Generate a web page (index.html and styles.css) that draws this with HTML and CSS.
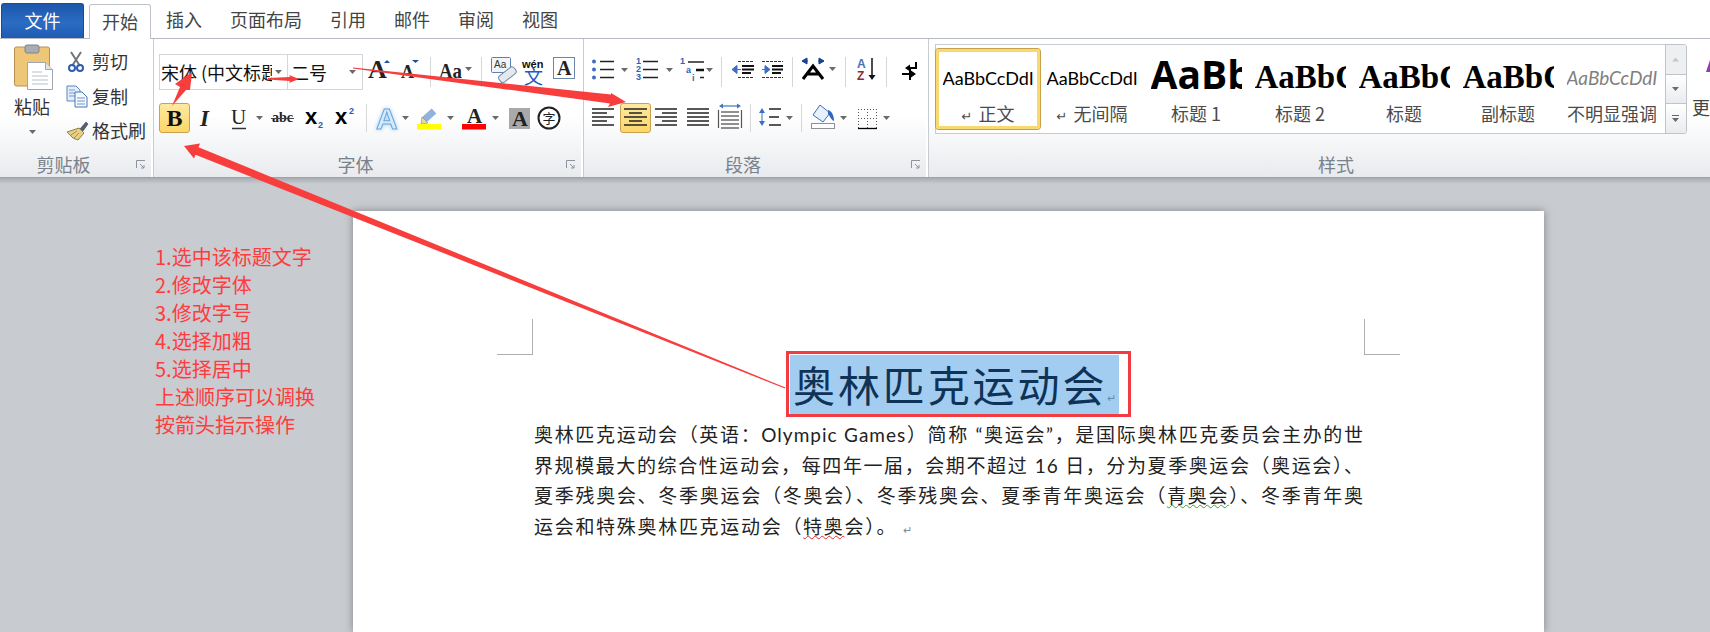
FILE: index.html
```html
<!DOCTYPE html>
<html lang="zh-CN">
<head>
  <meta charset="UTF-8" />
  <title>文档 - Word</title>
  <link rel="stylesheet" href="styles.css">
</head>
<body>
<div class="app">

  <nav class="tabs">
    <a class="tab-file">文件</a>
    <a class="tab-active">开始</a>
    <a class="tab">插入</a>
    <a class="tab">页面布局</a>
    <a class="tab">引用</a>
    <a class="tab">邮件</a>
    <a class="tab">审阅</a>
    <a class="tab">视图</a>
  </nav>

  <section class="ribbon">

    <!-- clipboard -->
    <div class="group group-clip">
      <div class="clip-body">
        <div class="paste">
          <svg width="40" height="47" viewBox="0 0 40 47">
            <rect x="0.5" y="3" width="35" height="39" rx="2" fill="#eec678" stroke="#b98f4f"/>
            <rect x="11" y="1" width="14" height="8" rx="2" fill="#a9adb3" stroke="#7e8288"/>
            <path d="M13.5 18.5h18l7 7v20h-25z" fill="#fff" stroke="#9ea6b0"/>
            <path d="M31.5 18.5v7h7" fill="#dfe5ec" stroke="#9ea6b0"/>
            <path d="M18 28h10M18 32h16M18 36h16M18 40h16" stroke="#b9c0c9"/>
          </svg>
          <span class="paste-label">粘贴</span>
          <svg width="8" height="5" viewBox="0 0 8 5"><path class="caret" d="M0 0h7l-3.5 4z"/></svg>
        </div>
        <ul class="clip-list">
          <li>
            <svg width="26" height="34" viewBox="0 0 26 34">
              <path d="M5 8l9 14M15 8l-9 14" stroke="#70757c" stroke-width="2" fill="none"/>
              <circle cx="6" cy="24" r="3" fill="none" stroke="#2c5cab" stroke-width="2"/>
              <circle cx="14" cy="24" r="3" fill="none" stroke="#2c5cab" stroke-width="2"/>
            </svg>
            剪切
          </li>
          <li>
            <svg width="26" height="34" viewBox="0 0 26 34">
              <path d="M1 7h9l4 4v11H1z" fill="#e4edf9" stroke="#5b86c4"/>
              <path d="M3 11h6M3 14h8M3 17h8" stroke="#7b9ccc"/>
              <path d="M9 13h7l5 5v10H9z" fill="#f6f9fd" stroke="#4474b8"/>
              <path d="M11 19h8M11 22h8M11 25h8" stroke="#6d94ca"/>
            </svg>
            复制
          </li>
          <li>
            <svg width="26" height="34" viewBox="0 0 26 34">
              <path d="M14 16l6-7 2 2-5 7z" fill="#555e6e" stroke="#3d4450" stroke-width="0.6"/>
              <path d="M1 19l12-4 5 5-6 7-5-2-2-2z" fill="#e8cf86" stroke="#94803f"/>
              <path d="M5 22l6-4M8 25l5-5" stroke="#a8924e"/>
            </svg>
            格式刷
          </li>
        </ul>
      </div>
      <footer class="group-foot">
        <span class="group-name">剪贴板</span>
        <span class="launcher"><svg width="10" height="9" viewBox="0 0 10 9"><path d="M.5 8V.5H9M4 4l4 4M8 5v3H5" fill="none" stroke="#8c939c"/></svg></span>
      </footer>
    </div>

    <!-- font -->
    <div class="group group-font">
      <div class="row row-top">
        <div class="combo combo-font"><span class="combo-text">宋体 (中文标题</span><svg width="8" height="5" viewBox="0 0 8 5"><path class="caret" d="M0 0h7l-3.5 4z"/></svg></div>
        <div class="combo combo-size"><span class="combo-text">二号</span><svg width="8" height="5" viewBox="0 0 8 5"><path class="caret" d="M0 0h7l-3.5 4z"/></svg></div>
        <svg width="30" height="36" viewBox="0 0 30 36">
          <text class="serif-b" x="4" y="24" font-size="26">A</text>
          <path d="M20 9l3-3 3 3z" fill="#1f4e9a"/>
        </svg>
        <svg width="32" height="36" viewBox="0 0 32 36">
          <text class="serif-b" x="7" y="24" font-size="18">A</text>
          <path d="M18 6h7l-3.5 3z" fill="#1f4e9a"/>
        </svg>
        <span class="sep sep-top"></span>
        <svg width="42" height="36" viewBox="0 0 42 36">
          <text class="serif-b" x="4" y="24" font-size="21" textLength="23" lengthAdjust="spacingAndGlyphs">Aa</text>
          <path class="caret" d="M30 13h7l-3.500 4z"/>
        </svg>
        <span class="sep sep-top"></span>
        <svg width="33" height="36" viewBox="0 0 33 36">
          <rect x="5.500" y="3.500" width="19" height="15" rx="1" fill="#f0f5fb" stroke="#5a7fb0"/>
          <text class="sans" x="8" y="14" font-size="10" fill="#333">Aa</text>
          <rect x="12" y="17" width="19" height="8" rx="3" transform="rotate(-38 21 21)" fill="#e3e9f0" stroke="#76879a"/>
        </svg>
        <svg width="30" height="36" viewBox="0 0 30 36">
          <text class="sans-b" x="3" y="14" font-size="11" fill="#111">wén</text>
          <text class="cjk" x="5" y="30" font-size="19" fill="#2459bd">文</text>
        </svg>
        <svg width="29" height="36" viewBox="0 0 29 36">
          <rect x="4.500" y="3.500" width="21" height="21" fill="#fff" stroke="#6d87a8"/>
          <text class="serif-b" x="8" y="21" font-size="20">A</text>
        </svg>
      </div>
      <div class="row">
        <span class="btn-on"><b class="bold-b">B</b></span>
        <svg width="30" height="30" viewBox="0 0 30 30">
          <text class="serif-b" x="10" y="23" font-size="23" font-style="italic">I</text>
        </svg>
        <svg width="48" height="30" viewBox="0 0 48 30">
          <text class="serif" x="11" y="21" font-size="21">U</text>
          <path d="M12 25.500h14" stroke="#333" stroke-width="1.500"/>
          <path class="caret" d="M36 13h7l-3.500 4z"/>
        </svg>
        <svg width="30" height="30" viewBox="0 0 30 30">
          <text class="serif-b" x="4" y="19" font-size="14">abc</text>
          <path d="M3 15.500h23" stroke="#444"/>
        </svg>
        <svg width="32" height="30" viewBox="0 0 32 30">
          <text class="sans-b" x="7" y="21" font-size="22">x</text>
          <text class="sans-b" x="20" y="25" font-size="9" fill="#2c5cab">2</text>
        </svg>
        <svg width="32" height="30" viewBox="0 0 32 30">
          <text class="sans-b" x="5" y="21" font-size="22">x</text>
          <text class="sans-b" x="19" y="11" font-size="9" fill="#2c5cab">2</text>
        </svg>
        <span class="sep sep-low"></span>
        <svg width="41" height="30" viewBox="0 0 41 30">
          <text class="sans-b glow" x="5" y="26" font-size="30" fill="#d8e9fb" stroke="#6aa6de">A</text>
          <path class="caret" d="M31 13h7l-3.500 4z"/>
        </svg>
        <svg width="45" height="30" viewBox="0 0 45 30">
          <path d="M12 17l10-9" stroke="#8fb3dc" stroke-width="7"/>
          <path d="M10 14l6 6-7 1z" fill="#e9d9a8" stroke="#8e8460" stroke-width="0.6"/>
          <rect x="5" y="21" width="24" height="5.500" fill="#ffff00"/>
          <path class="caret" d="M35 13h7l-3.500 4z"/>
        </svg>
        <svg width="45" height="30" viewBox="0 0 45 30">
          <text class="serif-b" x="10" y="20" font-size="21" fill="#1f3f7f">A</text>
          <rect x="5" y="21" width="24" height="5.500" fill="#ff0000"/>
          <path class="caret" d="M35 13h7l-3.500 4z"/>
        </svg>
        <svg width="32" height="30" viewBox="0 0 32 30">
          <rect x="7" y="5" width="21" height="21" fill="#a9a9a9"/>
          <text class="serif-b" x="10" y="23" font-size="22" fill="#111">A</text>
        </svg>
        <svg width="31" height="30" viewBox="0 0 31 30">
          <circle cx="15" cy="15" r="10.500" fill="#fff" stroke="#222" stroke-width="2"/>
          <text class="cjk" x="8.500" y="20" font-size="13" fill="#222">字</text>
        </svg>
      </div>
      <footer class="group-foot">
        <span class="group-name">字体</span>
        <span class="launcher"><svg width="10" height="9" viewBox="0 0 10 9"><path d="M.5 8V.5H9M4 4l4 4M8 5v3H5" fill="none" stroke="#8c939c"/></svg></span>
      </footer>
    </div>

    <!-- paragraph -->
    <div class="group group-para">
      <div class="row row-top">
        <svg width="43" height="36" viewBox="0 0 43 36">
          <path d="M11 7.500h14M11 15.500h14M11 23.500h14" stroke="#222" stroke-width="1.500"/>
          <circle cx="5" cy="7.500" r="2" fill="#3a6fc4"/><circle cx="5" cy="15.500" r="2" fill="#3a6fc4"/><circle cx="5" cy="23.500" r="2" fill="#3a6fc4"/>
          <path class="caret" d="M32 14h7l-3.500 4z"/>
        </svg>
        <svg width="44" height="36" viewBox="0 0 44 36">
          <path d="M11 7.500h15M11 15.500h15M11 23.500h15" stroke="#222" stroke-width="1.500"/>
          <text class="sans-b num" x="4" y="10">1</text><text class="sans-b num" x="4" y="18">2</text><text class="sans-b num" x="4" y="26">3</text>
          <path class="caret" d="M34 14h7l-3.500 4z"/>
        </svg>
        <svg width="41" height="36" viewBox="0 0 41 36">
          <path d="M12 8h16" stroke="#222" stroke-width="1.500"/>
          <path d="M20 16h8" stroke="#111" stroke-width="2.500"/>
          <path d="M24 23.500h4" stroke="#222" stroke-width="1.500"/>
          <text class="sans-b num" x="4" y="10">1</text><text class="sans-b num" x="10" y="19">a</text><text class="sans-b num" x="16" y="27">i</text>
          <path class="caret" d="M30 14h7l-3.500 4z"/>
        </svg>
        <span class="sep sep-top"></span>
        <svg width="32" height="36" viewBox="0 0 32 36">
          <path d="M12 7.500h16M12 23.500h16" stroke="#333" stroke-dasharray="3 1"/>
          <path d="M16 12h12M16 15.500h12M16 19h9" stroke="#111" stroke-width="2"/>
          <path d="M6 15.500l5-4v8zM10 15.500h5" fill="#3a6fc4" stroke="#3a6fc4"/>
        </svg>
        <svg width="30" height="36" viewBox="0 0 30 36">
          <path d="M4 7.500h21M4 23.500h21" stroke="#333" stroke-dasharray="3 1"/>
          <path d="M14 12h11M14 15.500h11M14 19h9" stroke="#111" stroke-width="2"/>
          <path d="M12 15.500l-5-4v8zM4 15.500h4" fill="#3a6fc4" stroke="#3a6fc4"/>
        </svg>
        <span class="sep sep-top"></span>
        <svg width="44" height="36" viewBox="0 0 44 36">
          <path d="M5 7h6M10 4l-5 3 5 3z M21 7h6M22 4l5 3-5 3z" fill="#1c3f94" stroke="#1c3f94"/>
          <path d="M6 25l10-13 10 13M10 20h12" fill="none" stroke="#000" stroke-width="3"/>
          <path class="caret" d="M32 13h7l-3.500 4z"/>
        </svg>
        <span class="sep sep-top"></span>
        <svg width="32" height="36" viewBox="0 0 32 36">
          <text class="sans-b" x="7" y="14" font-size="12" fill="#4a6fb5">A</text>
          <text class="sans-b" x="7" y="26" font-size="12" fill="#8b2c2c">Z</text>
          <path d="M22 4v20" stroke="#111" stroke-width="1.500"/>
          <path d="M18.500 21h7L22 26z" fill="#111"/>
        </svg>
        <span class="sep sep-top"></span>
        <svg width="32" height="36" viewBox="0 0 32 36">
          <path d="M25 8v6h-8M19 26V14M11 20h9" fill="none" stroke="#000" stroke-width="2"/>
          <path d="M14 14l5-3.500v7zM25 20l-5-3.500v7z" fill="#000"/>
        </svg>
      </div>
      <div class="row">
        <svg width="31" height="30" viewBox="0 0 31 30">
          <path d="M3 6h22M3 10h15M3 14h22M3 18h15M3 22h22" stroke="#222" stroke-width="1.300"/>
        </svg>
        <span class="btn-on">
          <svg width="29" height="28" viewBox="0 0 29 28">
            <path d="M3 5h23M8 9h13M3 13h23M8 17h13M3 21h23" stroke="#222" stroke-width="1.300"/>
          </svg>
        </span>
        <svg width="30" height="30" viewBox="0 0 30 30">
          <path d="M4 6h22M11 10h15M4 14h22M11 18h15M4 22h22" stroke="#222" stroke-width="1.300"/>
        </svg>
        <svg width="33" height="30" viewBox="0 0 33 30">
          <path d="M6 6h22M6 10h22M6 14h22M6 18h22M6 22h22" stroke="#222" stroke-width="1.300"/>
        </svg>
        <svg width="32" height="30" viewBox="0 0 32 30">
          <path d="M7 3h18" stroke="#4474b8" stroke-width="1.200"/>
          <path d="M5 3l4-2.500v5zM27 3l-4-2.500v5z" fill="#4474b8"/>
          <path d="M4.500 7v18M27.500 7v18" stroke="#555" stroke-width="1.200"/>
          <path d="M7 9h18M7 13h18M7 17h18M7 21h18M7 25h18" stroke="#222" stroke-width="1.200"/>
        </svg>
        <span class="sep sep-low"></span>
        <svg width="42" height="30" viewBox="0 0 42 30">
          <path d="M7 5l-3 5h6zM7 23l-3-5h6z" fill="#3a6fc4"/>
          <path d="M7 10v8" stroke="#3a6fc4"/>
          <path d="M14 6h12M14 14h10M14 22h12" stroke="#222" stroke-width="1.500"/>
          <path class="caret" d="M31 13h7l-3.500 4z"/>
        </svg>
        <span class="sep sep-low"></span>
        <svg width="45" height="30" viewBox="0 0 45 30">
          <path d="M14 2l10 8-7 9-10-7z" fill="#e8f0fb" stroke="#3f6fb8"/>
          <path d="M22 7c4 1 6 6 6 11-3-1-4-5-6-7z" fill="#2f66c4"/>
          <rect x="5.500" y="20.500" width="23" height="5" fill="#fff" stroke="#8d9096"/>
          <path class="caret" d="M34 13h7l-3.500 4z"/>
        </svg>
        <svg width="43" height="30" viewBox="0 0 43 30">
          <path d="M7 6.500h19M7 15.500h19M7.500 6v19M16.500 6v19M25.500 6v19" stroke="#555" stroke-dasharray="1 2"/>
          <path d="M7 25.500h19" stroke="#000" stroke-width="1.300"/>
          <path class="caret" d="M32 13h7l-3.500 4z"/>
        </svg>
      </div>
      <footer class="group-foot">
        <span class="group-name">段落</span>
        <span class="launcher"><svg width="10" height="9" viewBox="0 0 10 9"><path d="M.5 8V.5H9M4 4l4 4M8 5v3H5" fill="none" stroke="#8c939c"/></svg></span>
      </footer>
    </div>

    <!-- styles -->
    <div class="group group-styles">
      <div class="styles-body">
        <div class="gallery">
          <div class="style-item style-current">
            <div class="sample sample-body">AaBbCcDdI</div>
            <div class="style-name"><i>↵</i>正文</div>
          </div>
          <div class="style-item">
            <div class="sample sample-body">AaBbCcDdI</div>
            <div class="style-name"><i>↵</i>无间隔</div>
          </div>
          <div class="style-item">
            <div class="sample sample-h1">AaBb</div>
            <div class="style-name">标题 1</div>
          </div>
          <div class="style-item">
            <div class="sample sample-h2">AaBbC</div>
            <div class="style-name">标题 2</div>
          </div>
          <div class="style-item">
            <div class="sample sample-h2">AaBbC</div>
            <div class="style-name">标题</div>
          </div>
          <div class="style-item">
            <div class="sample sample-h2">AaBbC</div>
            <div class="style-name">副标题</div>
          </div>
          <div class="style-item">
            <div class="sample sample-em">AaBbCcDdI</div>
            <div class="style-name">不明显强调</div>
          </div>
        </div>
        <div class="gallery-scroll">
          <span class="scroll-btn scroll-off"><svg width="8" height="5" viewBox="0 0 8 5"><path d="M0 4.500h7L3.500 .5z" fill="#c3c6cb"/></svg></span>
          <span class="scroll-btn"><svg width="8" height="5" viewBox="0 0 8 5"><path class="caret" d="M0 0h7l-3.5 4z"/></svg></span>
          <span class="scroll-btn"><svg width="8" height="8" viewBox="0 0 8 8"><path d="M0 .5h7" stroke="#666"/><path class="caret" d="M0 3h7l-3.5 4z"/></svg></span>
        </div>
        <div class="change-styles">
          <svg width="18" height="40" viewBox="0 0 18 40"><path d="M14 28l5-15v15z" fill="#8c3fb0"/></svg>
          <span>更改样式</span>
        </div>
      </div>
      <footer class="group-foot">
        <span class="group-name">样式</span>
        <span class="launcher"></span>
      </footer>
    </div>
  </section>

  <main class="workspace">
    <aside class="notes">
      <p>1.选中该标题文字</p>
      <p>2.修改字体</p>
      <p>3.修改字号</p>
      <p>4.选择加粗</p>
      <p>5.选择居中</p>
      <p>上述顺序可以调换</p>
      <p>按箭头指示操作</p>
    </aside>
    <article class="page">
      <div class="crop-row">
        <span class="crop crop-left"></span>
        <span class="crop crop-right"></span>
      </div>
      <div class="title-box">
        <h1 class="doc-title">奥林匹克运动会<i>↵</i></h1>
      </div>
      <div class="doc-body">
        <p>奥林匹克运动会（英语：Olympic Games）简称 “奥运会”，是国际奥林匹克委员会主办的世</p>
        <p>界规模最大的综合性运动会，每四年一届，会期不超过 16 日，分为夏季奥运会（奥运会）、</p>
        <p>夏季残奥会、冬季奥运会（冬奥会）、冬季残奥会、夏季青年奥运会（<span class="squiggle-green">青奥会</span>）、冬季青年奥</p>
        <p class="last-line">运会和特殊奥林匹克运动会（<span class="squiggle-red">特奥</span>会）。<i>↵</i></p>
      </div>
    </article>
  </main>

  <!-- red annotation arrows drawn over the window -->
  <svg class="arrows" width="1710" height="632" viewBox="0 0 1710 632">
    <polygon points="172,106 180,87 175,84 192,72 190,90 186,90"/>
    <polygon points="268,78 290,77 289,75 299,79 289,83 290,81 268,79.500"/>
    <polygon points="353,67.500 611,94.500 611,93 626,102 608,107 610,103.500 353,68.500"/>
    <polygon points="184,146 200,143.600 198.500,147.300 785.500,387.500 785,388.500 195.500,154.700 194,158.400"/>
  </svg>
</div>
</body>
</html>
```

FILE: styles.css
```css
* {
  box-sizing: border-box;
}
html, body {
  margin: 0;
  height: 100%;
  overflow: hidden;
}
body {
  font-family: "Noto Sans CJK SC", sans-serif;
  color: #444;
  background-color: #c8cbd0;
}
svg {
  display: block;
  flex: none;
}
.app {
  position: relative;
  width: 1710px;
  height: 632px;
  display: flex;
  flex-direction: column;
  overflow: hidden;
}

/* svg text */
.serif-b { font-family: "Liberation Serif", serif; font-weight: 700; fill: #222; }
.serif { font-family: "Liberation Serif", serif; fill: #222; }
.sans { font-family: "Liberation Sans", sans-serif; }
.sans-b { font-family: "Liberation Sans", sans-serif; font-weight: 700; }
.cjk { font-family: "Noto Sans CJK SC", sans-serif; }
.num { font-size: 9px; fill: #2f62b8; }
.glow { filter: drop-shadow(0 0 2px #a6d0f5); }
.caret { fill: #6a6a6a; }

/* tabs */
.tabs {
  height: 38px;
  flex: none;
  display: flex;
  align-items: flex-end;
  padding-left: 1px;
  background-color: #fff;
  font-size: 18px;
}
.tabs a {
  height: 35px;
  line-height: 33px;
  white-space: nowrap;
}
.tab-file {
  width: 83px;
  text-align: center;
  color: #fff;
  border-radius: 3px 3px 0 0;
  background: linear-gradient(#1c57ab, #2b6cc4 55%, #1f5cb2);
  border: 1px solid #1a4c94;
  border-bottom: 0;
}
.tab-active {
  width: 62px;
  margin-left: 5px;
  margin-bottom: -1px;
  text-align: center;
  background-color: #fff;
  border: 1px solid #c0c3c9;
  border-bottom: 0;
  border-radius: 3px 3px 0 0;
  position: relative;
}
.tab {
  padding: 0 14px;
}
.tab-active + .tab {
  margin-left: 1px;
}

/* ribbon */
.ribbon {
  height: 140px;
  flex: none;
  display: flex;
  border-top: 1px solid #b9bbc3;
  border-bottom: 1px solid #9fa3a9;
  background: linear-gradient(#fff 55%, #f3f4f6 80%, #e8eaed);
}
.group {
  flex: none;
  display: flex;
  flex-direction: column;
  border-right: 1px solid #c8cbd1;
  box-shadow: inset -2px 0 0 #fff;
}
.group-clip { width: 154px; }
.group-font { width: 430px; padding: 15px 0 0 5px; }
.group-para { width: 345px; padding: 15px 0 0 5px; }
.group-styles { width: 840px; border-right: 0; box-shadow: none; padding-top: 5px; }

.group-foot {
  margin-top: auto;
  height: 26px;
  display: flex;
  align-items: center;
  font-size: 18px;
  color: #78818c;
}
.group-font .group-foot,
.group-para .group-foot {
  margin-left: -5px;
}
.group-name {
  flex: 1;
  text-align: center;
  line-height: 26px;
}
.launcher {
  width: 26px;
  padding-left: 9px;
}

.row {
  display: flex;
  align-items: center;
  height: 30px;
}
.row-top {
  height: 36px;
  margin-bottom: 13px;
}
.sep {
  flex: none;
  width: 9px;
  display: flex;
  justify-content: center;
}
.sep::after {
  content: "";
  width: 1px;
  background-color: #d5d7db;
}
.sep-top { height: 30px; }
.sep-low { height: 28px; }

.btn-on {
  flex: none;
  width: 31px;
  height: 30px;
  display: flex;
  align-items: center;
  justify-content: center;
  border: 1px solid #c8a24e;
  border-radius: 3px;
  background: linear-gradient(#fde9a0, #fdd669);
}
.bold-b {
  font-family: "Liberation Serif", serif;
  font-size: 24px;
  line-height: 1;
  color: #111;
}

/* clipboard */
.clip-body {
  display: flex;
  padding-top: 5px;
}
.paste {
  width: 66px;
  padding-left: 14px;
  display: flex;
  flex-direction: column;
}
.paste-label {
  font-size: 18px;
  line-height: 26px;
  margin-top: 2px;
  color: #333;
}
.paste svg:last-child {
  margin: 11px 0 0 15px;
}
.clip-list {
  list-style: none;
  margin: 0;
  padding: 0;
  font-size: 18px;
  color: #333;
}
.clip-list li {
  height: 34.500px;
  display: flex;
  align-items: center;
  white-space: nowrap;
}

/* font combos */
.combo {
  height: 36px;
  display: flex;
  align-items: center;
  border: 1px solid #d3d6da;
  background-color: #fff;
  font-size: 18px;
  color: #111;
}
.combo-font {
  width: 129px;
  padding-left: 1px;
}
.combo-size {
  width: 76px;
  margin-left: -1px;
  padding-left: 3px;
  margin-right: 1px;
}
.combo-text {
  flex: 1;
  overflow: hidden;
  white-space: nowrap;
}
.combo-font .combo-text { margin-right: 3px; }
.combo svg { margin-right: 4px; }
.combo-size svg { margin-right: 5px; }

/* styles gallery */
.styles-body {
  display: flex;
  align-items: flex-start;
  padding-left: 6px;
}
.gallery {
  width: 731px;
  height: 90px;
  flex: none;
  display: flex;
  align-items: flex-start;
  padding: 0;
  border: 1px solid #c8cbd0;
  background-color: #fff;
}
.style-item {
  flex: none;
  width: 104px;
  height: 88px;
  display: flex;
  flex-direction: column;
  align-items: center;
  border: 3px solid transparent;
}
.style-current {
  height: 80px;
  margin-top: 4px;
  border-color: #f7d96f;
  border-radius: 3px;
  box-shadow: 0 0 0 1px #c9a04a;
}
.sample {
  flex: none;
  width: 91px;
  height: 52px;
  line-height: 60px;
  overflow: hidden;
  white-space: nowrap;
  color: #000;
}
.style-current .sample {
  height: 48px;
  line-height: 52px;
}
.style-name {
  flex: none;
  height: 26px;
  font-size: 18px;
  line-height: 26px;
  white-space: nowrap;
  color: #4b4b4b;
}
.style-name i {
  font-style: normal;
  font-family: "DejaVu Sans", sans-serif;
  font-size: 13px;
  margin-right: 6px;
}
.sample-body {
  font-family: "Lato", sans-serif;
  font-size: 18px;
  text-align: center;
}
.sample-h1 {
  font-family: "Open Sans", sans-serif;
  font-weight: 700;
  font-size: 39px;
  line-height: 52px;
}
.sample-h2 {
  font-family: "Liberation Serif", serif;
  font-weight: 700;
  font-size: 33px;
  line-height: 58px;
}
.sample-em {
  font-family: "Lato", sans-serif;
  font-style: italic;
  font-size: 19px;
  color: #808080;
}
.gallery-scroll {
  width: 22px;
  height: 90px;
  flex: none;
  margin-left: -1px;
  display: flex;
  flex-direction: column;
  border: 1px solid #c0c4ca;
  border-radius: 0 3px 3px 0;
  overflow: hidden;
}
.scroll-btn {
  flex: 1;
  display: flex;
  align-items: center;
  justify-content: center;
  background: linear-gradient(#fff, #e9ebee);
  border-bottom: 1px solid #c0c4ca;
}
.scroll-btn:last-child { border-bottom: 0; }
.scroll-off { background: #eeeff1; }
.change-styles {
  margin-left: 5px;
  font-size: 18px;
  line-height: 26px;
  white-space: nowrap;
  color: #444;
}
.change-styles span {
  display: block;
  margin-top: 10px;
}

/* document area */
.workspace {
  flex: 1;
  min-height: 0;
  display: flex;
  background: linear-gradient(#a9acb1, #c8cbd0 6px);
}
.notes {
  width: 353px;
  flex: none;
  padding: 65px 0 0 155px;
  font-size: 20px;
  line-height: 28px;
  color: #ff3c3c;
  white-space: nowrap;
}
.notes p {
  margin: 0;
}
.page {
  width: 1191px;
  flex: none;
  margin-top: 33px;
  padding-top: 108px;
  background-color: #fff;
  box-shadow: 0 0 8px #7f8287;
}
.crop-row {
  display: flex;
  justify-content: space-between;
  padding: 0 144px;
}
.crop {
  width: 36px;
  height: 36px;
  border-bottom: 1px solid #aeaeae;
}
.crop-left { border-right: 1px solid #aeaeae; }
.crop-right { border-left: 1px solid #aeaeae; }

.title-box {
  width: 345px;
  height: 66px;
  margin: -4px 0 0 433px;
  padding: 1px 9px 0 1px;
  border: 3px solid #f03c42;
}
.doc-title {
  margin: 0;
  height: 59px;
  padding-left: 3px;
  font-size: 42px;
  font-weight: 400;
  line-height: 58px;
  letter-spacing: 2.900px;
  white-space: nowrap;
  color: #0f3357;
  background-color: #a3cdf0;
}
.doc-title i {
  font-style: normal;
  font-family: "DejaVu Sans", sans-serif;
  font-size: 11px;
  letter-spacing: 0;
  color: #6f8aa3;
}
.doc-body {
  width: 830px;
  margin: 3px 0 0 181px;
  font-family: "Lato", "Noto Sans CJK SC", sans-serif;
  font-size: 19px;
  line-height: 30.700px;
  letter-spacing: 1px;
  color: #222;
}
.doc-body p {
  margin: 0;
  height: 30.700px;
  white-space: nowrap;
  text-align: justify;
  text-align-last: justify;
  overflow: hidden;
}
.doc-body .last-line {
  text-align-last: left;
  letter-spacing: 1.700px;
}
.last-line i {
  font-style: normal;
  font-family: "DejaVu Sans", sans-serif;
  font-size: 11px;
  color: #888;
  margin-left: 6px;
}
.squiggle-green {
  text-decoration: underline wavy #3aa53a 1px;
  text-underline-offset: 1px;
}
.squiggle-red {
  text-decoration: underline wavy #e03030 1px;
  text-underline-offset: 1px;
}

.arrows {
  position: absolute;
  left: 0;
  top: 0;
  pointer-events: none;
}
.arrows polygon {
  fill: #f83d3d;
}
```
